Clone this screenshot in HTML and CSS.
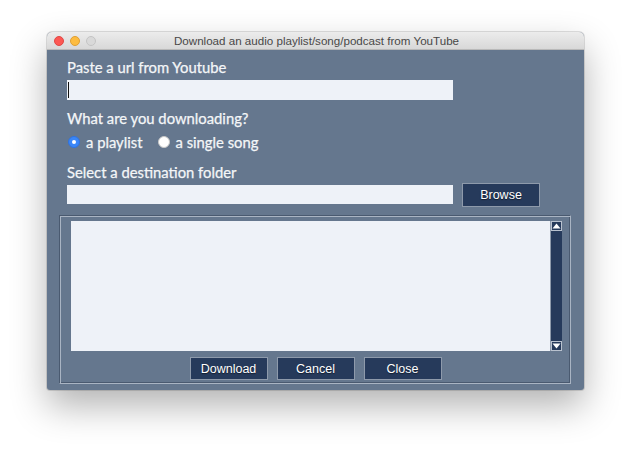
FILE: index.html
```html
<!DOCTYPE html>
<html>
<head>
<meta charset="utf-8">
<link rel="stylesheet" href="styles.css">
</head>
<body>
<div class="window">
  <div class="titlebar">
    <div class="lights">
      <span class="light red"></span>
      <span class="light yellow"></span>
      <span class="light gray"></span>
    </div>
    <div class="title">Download an audio playlist/song/podcast from YouTube</div>
  </div>
  <div class="content">
    <div class="label l1">Paste a url from Youtube</div>
    <div class="input url"><span class="caret"></span></div>
    <div class="label l2">What are you downloading?</div>
    <div class="radios">
      <span class="radio on"></span><span class="rlabel">a playlist</span>
      <span class="radio"></span><span class="rlabel">a single song</span>
    </div>
    <div class="label l3">Select a destination folder</div>
    <div class="folder-row">
      <div class="input folder"></div>
      <div class="btn browse">Browse</div>
    </div>
    <div class="frame">
      <div class="log">
        <div class="textarea"></div>
        <div class="scrollbar">
          <div class="arrow up"><svg width="9" height="6" viewBox="0 0 9 6"><polygon points="4.5,0.5 8.5,5.5 0.5,5.5" fill="#ffffff"/></svg></div>
          <div class="track"></div>
          <div class="arrow down"><svg width="9" height="6" viewBox="0 0 9 6"><polygon points="0.5,0.5 8.5,0.5 4.5,5.5" fill="#ffffff"/></svg></div>
        </div>
      </div>
      <div class="buttons">
        <div class="btn">Download</div>
        <div class="btn">Cancel</div>
        <div class="btn">Close</div>
      </div>
    </div>
  </div>
</div>
</body>
</html>
```
FILE: styles.css
```css
html, body {
  margin: 0;
  padding: 0;
  background: #ffffff;
}
body {
  width: 632px;
  height: 454px;
  overflow: hidden;
}
.window {
  margin: 32px 0 0 47px;
  width: 537px;
  height: 358px;
  border-radius: 5px 5px 3px 3px;
  background: #65778e;
  box-shadow: 0 16px 36px rgba(0,0,0,0.3), 0 0 0 1px rgba(0,0,0,0.12);
  overflow: hidden;
  display: flex;
  flex-direction: column;
}
.titlebar {
  height: 17px;
  flex: none;
  background: linear-gradient(#ececec, #d8d8d8);
  border-bottom: 1px solid #b9b9b9;
  position: relative;
  display: flex;
  align-items: center;
  justify-content: center;
}
.lights {
  position: absolute;
  left: 7px;
  top: 4px;
  display: flex;
  gap: 6px;
}
.light {
  width: 10px;
  height: 10px;
  border-radius: 50%;
  box-sizing: border-box;
}
.red { background: #fc5753; border: 1px solid #df4744; }
.yellow { background: #fdbc40; border: 1px solid #de9f34; }
.gray { background: #d9d9d9; border: 1px solid #c4c4c4; }
.title {
  font-family: "Liberation Sans", Arial, sans-serif;
  font-size: 11.6px;
  color: #484848;
  padding-left: 2px;
}
.content {
  padding: 0 0 0 20px;
  display: flex;
  flex-direction: column;
  font-family: "Lato", "Open Sans", sans-serif;
  color: #f4f6f8;
  -webkit-text-stroke: 0.25px #f4f6f8;
}
.label {
  font-size: 14.8px;
  line-height: 18px;
  height: 18px;
}
.l1 { margin-top: 8px; }
.l2 { margin-top: 9px; }
.l3 { margin-top: 13px; }
.input {
  background: #eef2f8;
  height: 20px;
  box-sizing: border-box;
}
.url {
  width: 386px;
  margin-top: 4px;
  position: relative;
}
.caret {
  position: absolute;
  left: 1px;
  top: 2px;
  width: 1px;
  height: 16px;
  background: #111111;
}
.radios {
  display: flex;
  align-items: center;
  height: 16px;
  margin-top: 7px;
  font-size: 14.8px;
}
.radio {
  width: 12px;
  height: 12px;
  border-radius: 50%;
  box-sizing: border-box;
  background: #ffffff;
  border: 1px solid #c8c8c8;
  margin-left: 1px;
  position: relative;
  flex: none;
}
.radio.on {
  background: #3a86f7;
  border-color: #2f73e0;
}
.radio.on::after {
  content: "";
  position: absolute;
  left: 3px;
  top: 3px;
  width: 4px;
  height: 4px;
  border-radius: 50%;
  background: #ffffff;
}
.rlabel {
  margin-left: 6px;
  margin-right: 14px;
}
.folder-row {
  display: flex;
  align-items: flex-start;
  gap: 9px;
  margin-top: 2px;
  height: 24px;
}
.folder {
  width: 386px;
  height: 19px;
  margin-top: 2px;
}
.btn {
  width: 78px;
  height: 24px;
  box-sizing: border-box;
  background: #263a5b;
  border: 1px solid #8e9aab;
  font-family: "Liberation Sans", Arial, sans-serif;
  font-size: 12.5px;
  color: #ffffff;
  -webkit-text-stroke: 0;
  display: flex;
  align-items: center;
  justify-content: center;
  text-shadow: 0 1px 1px rgba(0,0,0,0.5);
}
.frame {
  margin: 8px 0 0 -8px;
  width: 512px;
  height: 169px;
  box-sizing: border-box;
  border: 1px solid;
  border-color: #4a5a70 #a9b4c3 #a9b4c3 #4a5a70;
  box-shadow: inset 1px 1px 0 #a9b4c3, inset -1px -1px 0 #4a5a70;
  display: flex;
  flex-direction: column;
  padding: 5px 0 0 11px;
}
.log {
  display: flex;
  height: 130px;
}
.textarea {
  width: 479px;
  background: #eef2f8;
}
.scrollbar {
  width: 11px;
  display: flex;
  flex-direction: column;
  background: #263a5b;
  border-left: 1px solid #8e9aab;
}
.arrow {
  height: 10px;
  flex: none;
  box-sizing: border-box;
  border: 1px solid #b9c2cf;
  display: flex;
  align-items: center;
  justify-content: center;
  background: #263a5b;
}
.track {
  flex: 1;
}
.buttons {
  display: flex;
  justify-content: center;
  gap: 9px;
  margin-top: 6px;
  margin-left: -10px;
}
.buttons .btn {
  height: 23px;
}
```
